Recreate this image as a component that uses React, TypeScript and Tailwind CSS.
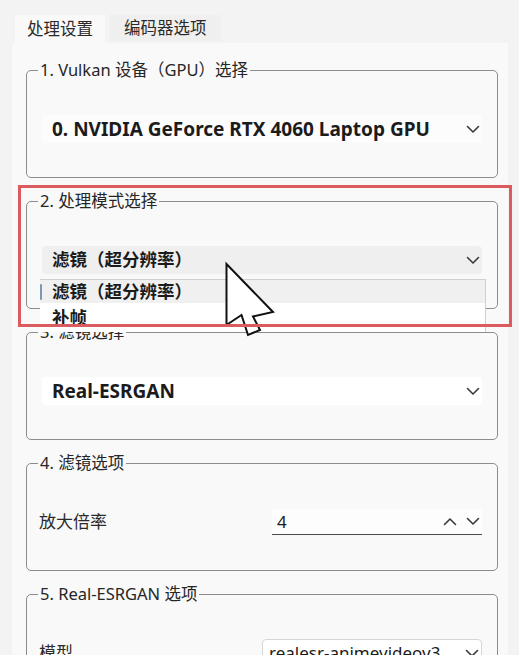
import React from "react";

function Chevron({ up = false }: { up?: boolean }) {
  return (
    <svg width="14" height="9" viewBox="0 0 14 9" className="shrink-0">
      <path
        d={up ? "M1.5 7.5 L7 2 L12.5 7.5" : "M1.5 1.5 L7 7 L12.5 1.5"}
        fill="none"
        stroke="#3a3a3a"
        strokeWidth="1.6"
        strokeLinecap="round"
        strokeLinejoin="round"
      />
    </svg>
  );
}

function Combo({ text, bg, size }: { text: string; bg: string; size: string }) {
  return (
    <div className={`flex h-[28px] items-center justify-between rounded-[4px] pl-[10px] pr-[2px] ${bg}`}>
      <span className={`${size} font-bold leading-none text-[#1b1b1b]`}>{text}</span>
      <Chevron />
    </div>
  );
}

function Group({ title, children }: { title: string; children: React.ReactNode }) {
  return (
    <fieldset className="min-w-0 rounded-[5px] border border-[#8c8c8c]">
      <legend className="ml-[11px] px-[2px] text-[16.5px] leading-[20px] text-[#262626]">{title}</legend>
      <div className="px-[15px] pt-[35px] pb-[34px]">{children}</div>
    </fieldset>
  );
}

export default function App() {
  return (
    <div className="relative h-[655px] w-[519px] overflow-hidden bg-[#f3f3f3] font-['Noto_Sans','Noto_Sans_CJK_SC',sans-serif] text-[#1b1b1b]">
      {/* tabs */}
      <div className="flex h-[43px] items-end pl-[15px]">
        <div className="flex h-[28px] items-center bg-[#f9f9f9] px-[12px] text-[16.5px] text-[#2a2a2a]">处理设置</div>
        <div className="mb-[2px] ml-[5px] flex h-[26px] items-center bg-[#efefef] px-[14px] text-[16.5px] text-[#2a2a2a]">编码器选项</div>
      </div>

      {/* tab page */}
      <div className="ml-[12px] flex h-[612px] w-[496px] flex-col gap-[13px] bg-[#f9f9f9] pt-[17px] pl-[14px] pr-[10px]">
        <Group title="1. Vulkan 设备（GPU）选择">
          <Combo text="0. NVIDIA GeForce RTX 4060 Laptop GPU" bg="bg-[#fcfcfc]" size="text-[19px]" />
        </Group>
        <Group title="2. 处理模式选择">
          <Combo text="滤镜（超分辨率）" bg="bg-[#efefef]" size="text-[17.5px]" />
        </Group>
        <Group title="3. 滤镜选择">
          <Combo text="Real-ESRGAN" bg="bg-white" size="text-[19px]" />
        </Group>
        <Group title="4. 滤镜选项">
          <div className="flex h-[28px] items-center justify-between">
            <span className="-ml-[3px] text-[17px] text-[#2a2a2a]">放大倍率</span>
            <div className="flex h-[26px] w-[210px] items-center justify-between border-b border-[#4a4a4a] bg-[#fdfdfd] pl-[5px] pr-[2px]">
              <span className="text-[17px] text-[#1b1b1b]">4</span>
              <div className="flex items-center gap-[9px]">
                <Chevron up />
                <Chevron />
              </div>
            </div>
          </div>
        </Group>
        <Group title="5. Real-ESRGAN 选项">
          <div className="flex h-[28px] items-center justify-between">
            <span className="-ml-[3px] text-[17px] text-[#2a2a2a]">模型</span>
            <div className="flex h-[28px] w-[220px] items-center justify-between rounded-[4px] border border-[#d6d6d6] bg-white pl-[6px] pr-[2px]">
              <span className="text-[17px] text-[#1b1b1b]">realesr-animevideov3</span>
              <Chevron />
            </div>
          </div>
        </Group>
      </div>

      {/* open dropdown list */}
      <div className="absolute left-[40px] top-[279px] w-[446px] border-r border-t border-[#d0d0d0] bg-white">
        <div className="relative flex h-[23px] items-center bg-[#f0f0f0] pl-[12px]">
          <span className="absolute left-0 top-[4px] h-[16px] w-[2px] rounded bg-[#7e97b0]" />
          <span className="text-[17.5px] font-bold leading-none">滤镜（超分辨率）</span>
        </div>
        <div className="flex h-[29px] items-center pl-[12px]">
          <span className="text-[17.5px] font-bold leading-none">补帧</span>
        </div>
      </div>

      {/* mouse cursor */}
      <svg className="absolute left-[220px] top-[258px]" width="60" height="85" viewBox="0 0 60 85">
        <polygon
          points="6.5,6 6.5,67 21.5,57 28,77 40,72 33,58.5 53,54"
          fill="white"
          stroke="#111"
          strokeWidth="2"
          strokeLinejoin="miter"
        />
      </svg>

      {/* highlight frame */}
      <div className="absolute left-[18px] top-[185px] h-[142px] w-[494px] border-[3px] border-[#dc5b5e]" />
    </div>
  );
}
